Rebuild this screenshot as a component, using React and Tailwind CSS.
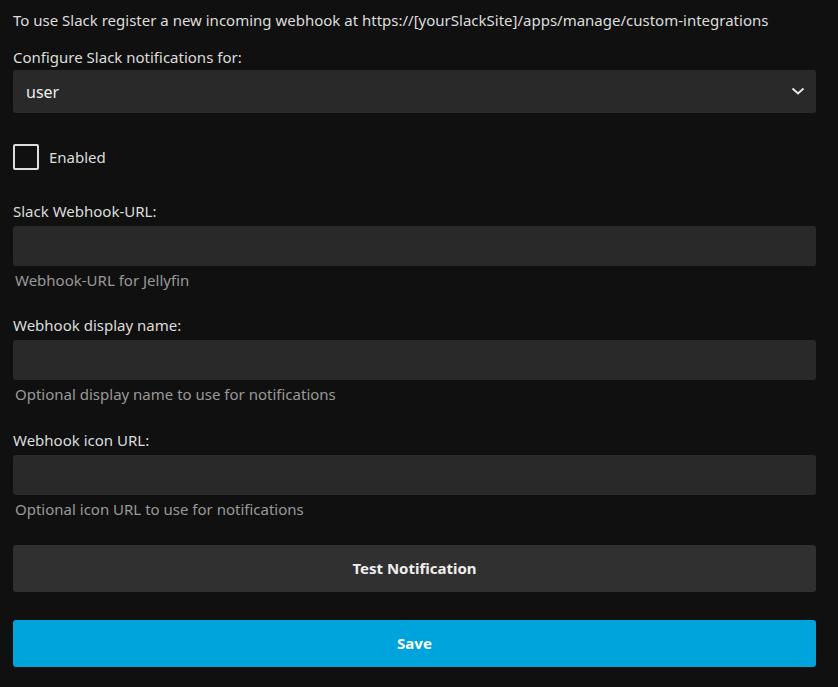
import React, { useState } from "react";

function Field({ label, help, className = "" }) {
    return (
        <div className={"mb-[25px] " + className}>
            <label className="block mb-[5px] text-[15px] leading-[20px] text-[#dddddd]">{label}</label>
            <input
                type="text"
                className="block w-full h-[40px] rounded-[3px] bg-[#292929] px-3 text-[16px] text-white outline-none"
            />
            <div className="mt-[4px] pl-[2px] text-[15px] leading-[20px] text-[#999999]">{help}</div>
        </div>
    );
}

export default function App() {
    const [enabled, setEnabled] = useState(false);

    return (
        <div
            className="min-h-[687px] flex flex-col bg-[#101010] pl-[13px] pr-[22px] pt-[10px] text-[#dddddd]"
            style={{ fontFamily: '"Noto Sans", sans-serif' }}
        >
            <p className="text-[15px] leading-[20px] mb-[17px]">
                To use Slack register a new incoming webhook at https://[yourSlackSite]/apps/manage/custom-integrations
            </p>

            <label className="block mb-[3px] text-[15px] leading-[20px]">Configure Slack notifications for:</label>
            <div className="relative">
                <select className="block w-full h-[43px] appearance-none rounded-[3px] bg-[#292929] px-[13px] text-[16px] text-[#eeeeee] outline-none">
                    <option>user</option>
                </select>
                <svg
                    className="pointer-events-none absolute right-[11px] top-[16px]"
                    width="14"
                    height="10"
                    viewBox="0 0 14 10"
                    fill="none"
                >
                    <path d="M1.5 2.5 L7 7.5 L12.5 2.5" stroke="#e6e6e6" strokeWidth="2" />
                </svg>
            </div>

            <label className="mt-[31px] mb-[31px] flex items-center gap-[10px] cursor-pointer">
                <span
                    onClick={() => setEnabled(!enabled)}
                    className="w-[26px] h-[26px] rounded-[2px] border-2 border-[#dddddd] flex items-center justify-center"
                >
                    {enabled && <span className="text-[14px]">✓</span>}
                </span>
                <span className="text-[15px] leading-[20px]">Enabled</span>
            </label>

            <Field label="Slack Webhook-URL:" help="Webhook-URL for Jellyfin" />
            <Field label="Webhook display name:" help="Optional display name to use for notifications" />
            <Field label="Webhook icon URL:" help="Optional icon URL to use for notifications" className="mt-[1px]" />

            <button className="mt-[1px] block w-full h-[47px] rounded-[3px] bg-[#303030] text-[15px] font-bold text-[#eeeeee]">
                Test Notification
            </button>
            <button className="mt-[28px] block w-full h-[47px] rounded-[3px] bg-[#00a4dc] text-[15px] font-bold text-white">
                Save
            </button>
        </div>
    );
}
